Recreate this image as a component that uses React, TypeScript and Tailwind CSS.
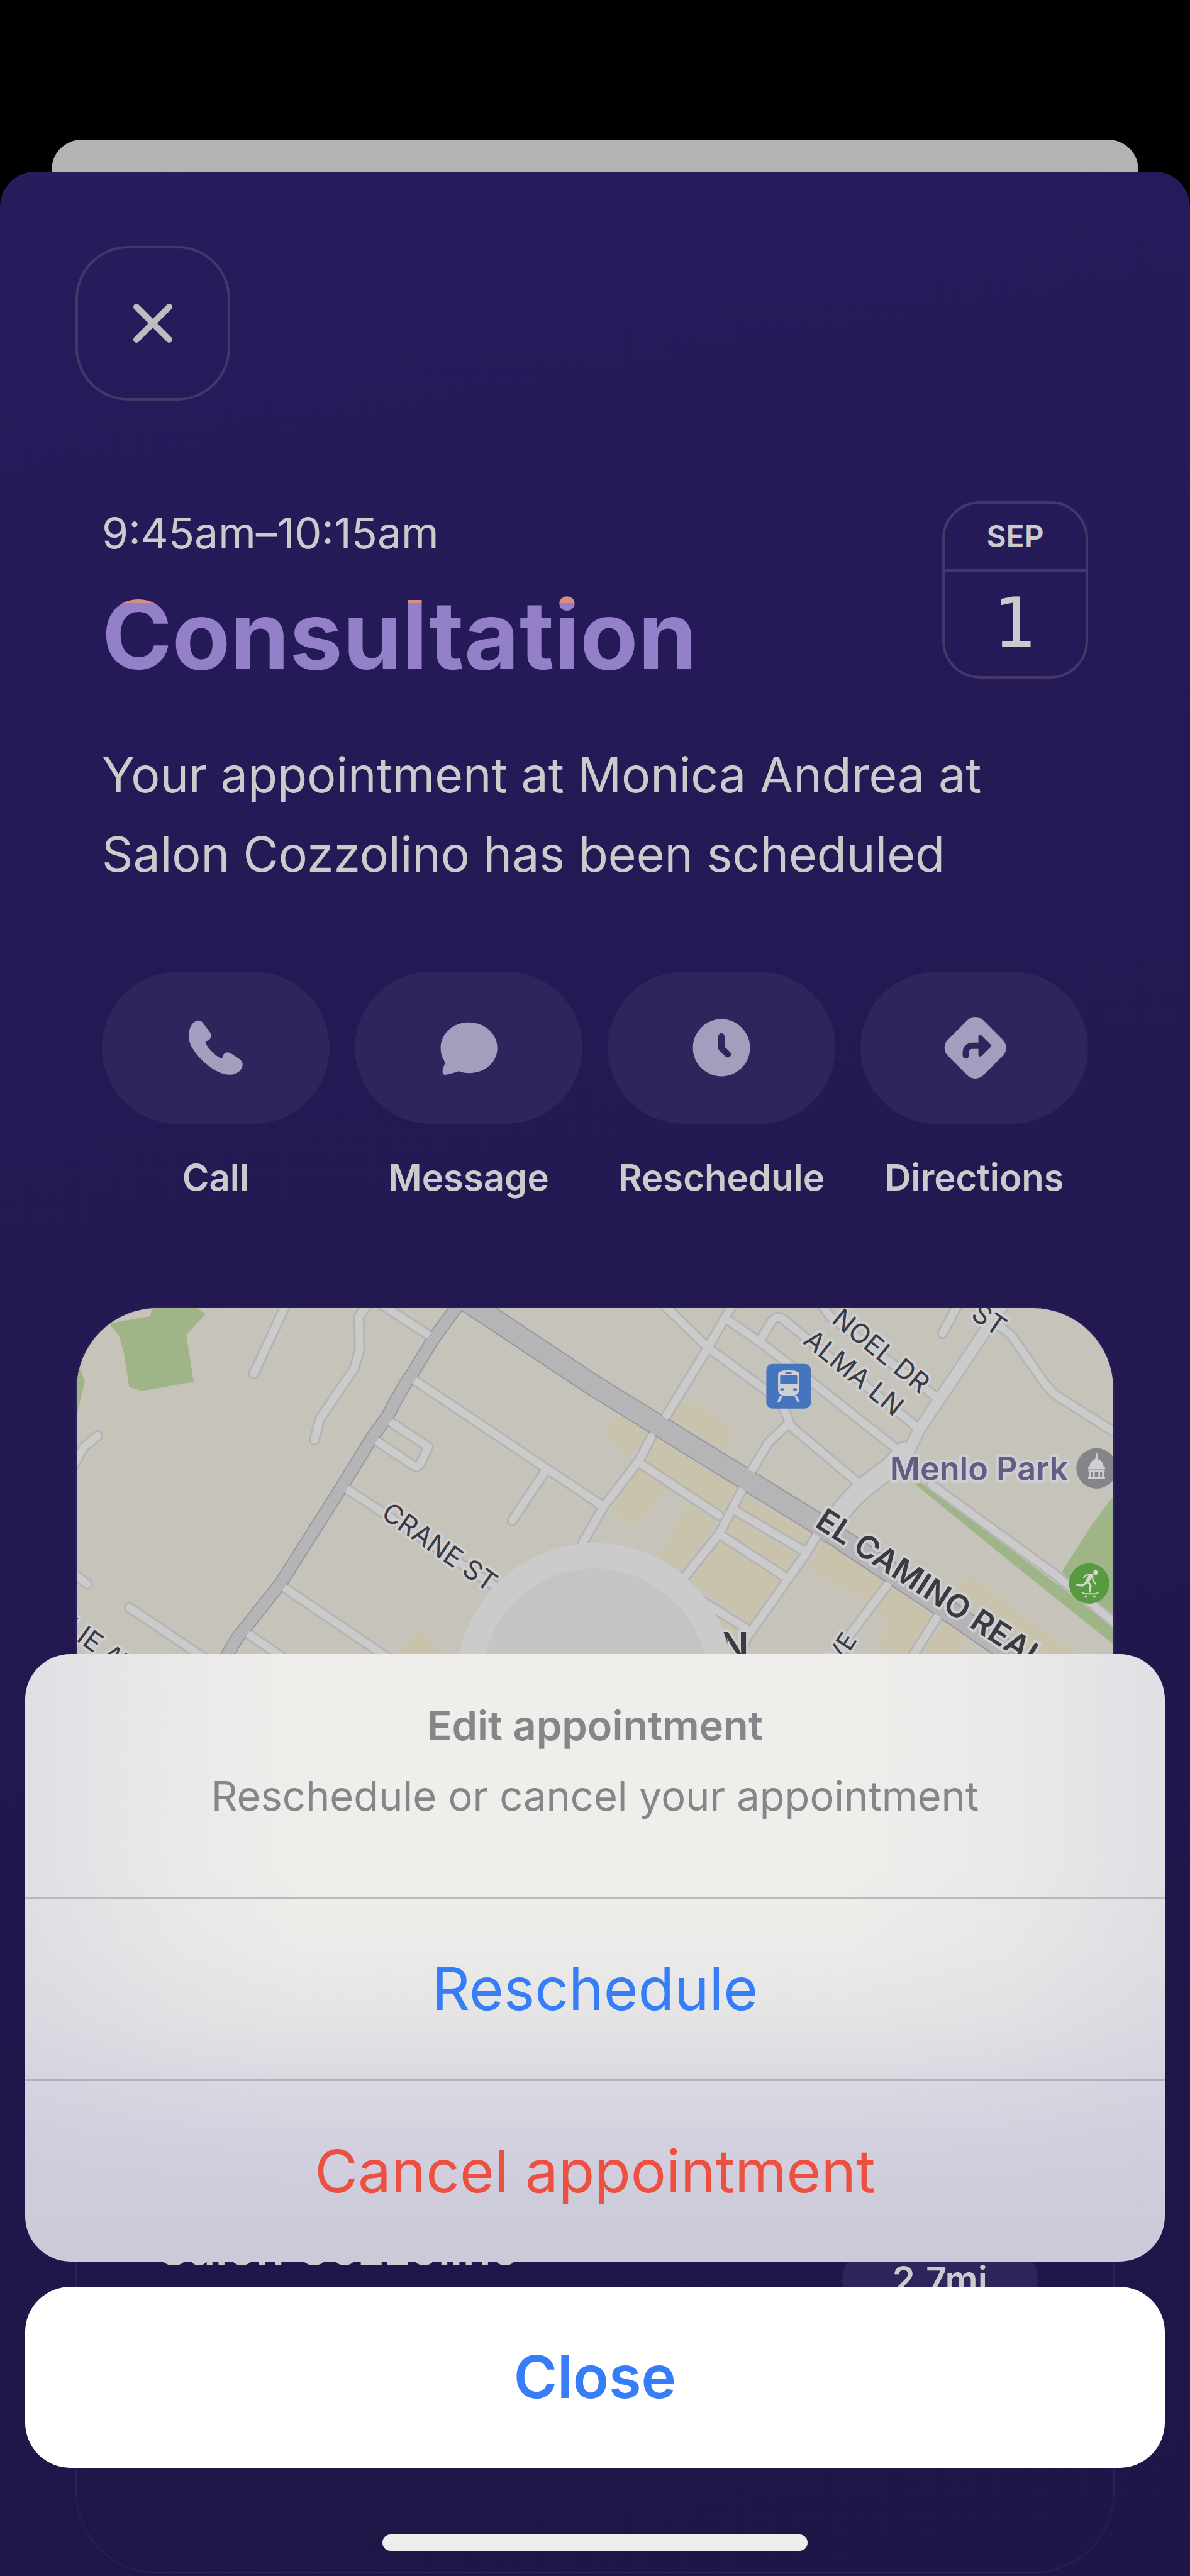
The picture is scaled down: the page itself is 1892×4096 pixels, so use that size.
import type { ReactNode } from 'react'

interface Action {
  label: string
  icon: ReactNode
}

const actions: Action[] = [
  {
    label: 'Call',
    icon: (
      <svg viewBox="24 33 300 300" className="size-[98px]" fill="#a59dbe" aria-hidden="true">
        <path d="M62 64Q78 50 94 51Q106 51 116 68L146 108Q154 118 151 130Q147 143 135 148L124 153Q124 165 134 176Q155 206 185 227Q197 236 205 234L209 222Q215 206 230 205Q240 204 252 213L282 233Q305 247 305 264Q305 280 290 296Q272 313 245 314Q200 317 140 272Q85 230 55 175Q42 150 43 120Q44 84 62 64Z" />
      </svg>
    ),
  },
  {
    label: 'Message',
    icon: (
      <svg viewBox="1246 33 300 300" className="size-[98px]" fill="#a59dbe" aria-hidden="true">
        <path d="M1397 60C1475 60 1536 115 1536 184C1536 255 1475 306 1400 306Q1370 306 1349 297Q1325 305 1288 314Q1268 317 1269 298Q1270 285 1280 262Q1280 252 1277 245Q1260 220 1260 184C1260 115 1320 60 1397 60Z" />
      </svg>
    ),
  },
  {
    label: 'Reschedule',
    icon: (
      <svg viewBox="17 33 300 300" className="size-[98px]" aria-hidden="true">
        <circle cx="167" cy="183" r="139" fill="#a59dbe" />
        <path d="M167 128V184L198 215" fill="none" stroke="#30245c" strokeWidth="31" strokeLinecap="round" strokeLinejoin="round" />
      </svg>
    ),
  },
  {
    label: 'Directions',
    icon: (
      <svg viewBox="1241 33 300 300" className="size-[98px] overflow-visible" aria-hidden="true">
        <rect x="1274" y="61" width="244" height="244" rx="55" fill="#a59dbe" transform="rotate(45 1396 183)" />
        <path d="M1350 220V208Q1350 173 1385 173H1420" fill="none" stroke="#30245c" strokeWidth="31" strokeLinecap="round" />
        <path d="M1420 130L1464 173L1420 216Z" fill="#30245c" stroke="#30245c" strokeWidth="18" strokeLinejoin="round" />
      </svg>
    ),
  },
]

const parks = [
  '52,25 118,13 123,-2 192,-2 208,10 177,43 189,119 106,134 85,128 76,72 68,43',
  '-2,85 6,98 13,118 1,169 -2,169',
  '1354,284 1365,282 1549,420 1676,515 1676,544 1526,424',
  '1676,303 1641,349 1592,426 1612,448 1676,495',
]

const blocks = [
  '978,151 1009,159 1063,199 1049,230 958,179',
  '871,171 850,207 894,242 923,203',
  '937,211 1067,290 1041,327 917,246',
  '906,258 955,292 903,355 863,329',
  '986,317 1035,345 978,426 939,400',
  '1081,306 1187,365 1170,385 1069,323',
  '1061,335 1167,400 1147,428 1047,361',
  '1038,375 1135,440 1090,513 992,440',
  '1207,377 1308,442 1279,476 1181,420',
  '1316,452 1385,497 1345,562 1292,547 1313,511 1285,480',
  '1402,507 1440,535 1422,562 1366,562',
  '1440,428 1618,562 1554,562 1422,456',
  '1042,505 1090,530 1075,562 1050,562',
  '550,515 597,562 517,562',
]

const streets = [
  'M340 -10L286 106',
  'M474 -10L456 13L457 68L448 98L393 179L384 213',
  'M486 -10L574 47',
  'M545 116L760 260L849 319',
  'M758 262L704 343',
  'M508 185L568 224L556 250Q551 260 542 253L485 215',
  'M436 292L677 450',
  'M330 448L504 566',
  'M275 525L338 568',
  'M85 484L207 566',
  'M34 206L11 225L-6 256',
  'M17 446L-6 428',
  'M929 207L909 246L851 321L818 379',
  'M820 300L851 321',
  'M952 175L1020 64L1062 -10',
  'M944 -10L1020 64L1124 140Q1146 160 1152 189L1262 282',
  'M1152 185L1118 217L1091 262',
  'M1049 17L1107 57L1158 96L1328 230',
  'M1104 53L1121 24Q1132 8 1144 20L1170 41L1356 191',
  'M1200 -10L1218 14L1388 143',
  'M1426 -10L1399 41',
  'M1474 14L1511 45L1566 124L1583 141L1684 205',
  'M1382 286L1583 432L1684 514',
  'M909 250L1038 335',
  'M1075 294L1055 333L1038 365L978 440',
  'M1064 327L1176 393',
  'M1038 365L1141 432',
  'M1199 362L1176 400L1084 531L1066 570',
  'M1015 476L1090 523',
  'M1311 446L1250 527L1230 570',
  'M1391 499L1346 570',
]

const wideStreets = ['M1500 -10L1468 37L1362 195L1340 240']

const mapLabels = [
  { text: 'CRANE ST', x: 490, y: 337, angle: 35, size: 43 },
  { text: 'NOEL DR', x: 1218, y: 22, angle: 39, size: 43 },
  { text: 'ALMA LN', x: 1172, y: 56, angle: 39, size: 43 },
  { text: 'ST', x: 1443, y: 15, angle: 35, size: 43 },
  { text: 'LIE AVE', x: -22, y: 522, angle: 36, size: 43 },
]

function MapView() {
  return (
    <svg viewBox="0 0 1675 1320" className="block h-auto w-full" fontFamily="Inter, sans-serif" role="img" aria-label="Map of Menlo Park">
      <rect width="1675" height="1320" fill="#c6c3bb" />
      <g fill="#c9c3ae">
        {blocks.map((points) => (
          <polygon key={points} points={points} />
        ))}
      </g>
      <g fill="#9fb587">
        {parks.map((points) => (
          <polygon key={points} points={points} />
        ))}
      </g>

      {/* casing first, so that junctions stay open */}
      <g fill="none" strokeLinecap="round" strokeLinejoin="round">
        <g stroke="#b4b4b5">
          {streets.map((d) => (
            <path key={d} d={d} strokeWidth="18" />
          ))}
          {wideStreets.map((d) => (
            <path key={d} d={d} strokeWidth="22" />
          ))}
          <path d="M1338 232L1312 260Q1262 294 1238 325L1214 362" strokeWidth="36" />
        </g>
        <path d="M620 -10L577 49L542 106Q524 132 502 175L476 211L430 286L330 444L258 535L240 566" stroke="#98989f" strokeWidth="22" />
        <path d="M614 -22L837 126L1192 345L1305 420L1388 475L1500 552" stroke="#98989f" strokeWidth="36" />
        <g stroke="#cbcbcb">
          {streets.map((d) => (
            <path key={d} d={d} strokeWidth="12" />
          ))}
          {wideStreets.map((d) => (
            <path key={d} d={d} strokeWidth="17" />
          ))}
          <path d="M1338 232L1312 260Q1262 294 1238 325L1214 362" strokeWidth="30" />
        </g>
        <path d="M620 -10L577 49L542 106Q524 132 502 175L476 211L430 286L330 444L258 535L240 566" stroke="#b5b5b7" strokeWidth="18" />
        <path d="M614 -22L837 126L1192 345L1305 420L1388 475L1500 552" stroke="#b5b5b7" strokeWidth="32" />
      </g>

      <g fill="#3b3b3f" stroke="#cfcfd3" strokeWidth="8" strokeLinejoin="round" paintOrder="stroke">
        {mapLabels.map((label) => (
          <text key={label.text} fontSize={label.size} transform={`translate(${label.x} ${label.y}) rotate(${label.angle})`}>
            {label.text}
          </text>
        ))}
        <text fontSize="40" textAnchor="end" transform="translate(1262 536) rotate(-57)">
          AVE
        </text>
        <text fontSize="51" fontWeight="600" transform="translate(1191 352) rotate(33)">
          EL CAMINO REAL
        </text>
        <text x="1086" y="568" fontSize="62" fontWeight="600" textAnchor="end">
          N
        </text>
        <text x="1314" y="278" fontSize="53" fontWeight="600" fill="#635c85">
          Menlo Park
        </text>
      </g>

      <circle cx="837" cy="603" r="223" fill="#cbcbcb" />
      <circle cx="837" cy="603" r="182" fill="#c4c4c4" />

      {/* train station */}
      <g transform="translate(1097 69) scale(0.3333)">
        <rect x="52" y="64" width="216" height="216" rx="28" fill="#4576bd" />
        <path d="M109 112Q109 95 160 95Q211 95 211 112V192Q211 210 186 218H134Q109 210 109 192Z" fill="#cfd0d6" />
        <path d="M126 217L110 248M193 217L209 248" stroke="#cfd0d6" strokeWidth="11" fill="none" />
        <rect x="119" y="119" width="83" height="43" rx="3" fill="#4576bd" />
        <rect x="144" y="103" width="31" height="8" rx="3" fill="#4576bd" />
        <rect x="119" y="182" width="19" height="10" rx="3" fill="#4576bd" />
        <rect x="182" y="182" width="19" height="10" rx="3" fill="#4576bd" />
      </g>

      {/* town hall and skate park */}
      <g transform="translate(1578 219) scale(0.3333)">
        <circle cx="210" cy="120" r="98" fill="#85848b" />
        <path d="M207 46H213L216 74Q242 84 245 114H251V125H169V114H175Q178 84 204 74ZM171 129H249V137H171ZM173 137H183V162H173ZM193 137H201V162H193ZM219 137H227V162H219ZM237 137H247V162H237ZM169 162H251V172H169Z" fill="#d0d0d2" />
        <circle cx="174" cy="678" r="98" fill="#579b41" />
        <g fill="none" stroke="#d2d8ce" strokeLinecap="round" strokeLinejoin="round">
          <path d="M148 649L160 637L190 636L193 665L206 681" strokeWidth="7" />
          <path d="M182 640L166 666" strokeWidth="19" />
          <path d="M163 670L143 688L115 685M170 672L181 688L178 718" strokeWidth="10" />
          <path d="M141 723Q148 728 158 728H200Q210 728 217 723" strokeWidth="6" />
        </g>
        <g fill="#d2d8ce">
          <circle cx="205" cy="625" r="11" />
          <circle cx="158" cy="741" r="6" />
          <circle cx="199" cy="741" r="6" />
        </g>
      </g>
    </svg>
  )
}

function DateBadge() {
  return (
    <div className="h-[282px] w-[232px] shrink-0 overflow-hidden rounded-[60px] border-4 border-[#433868] text-center text-[#cbcbcb]">
      <div className="border-b-4 border-[#433868] text-[48px] leading-[104px] font-semibold">SEP</div>
      <div className="font-['DejaVu_Sans'] text-[108px] leading-[164px]">1</div>
    </div>
  )
}

function ActionSheet() {
  return (
    <div className="absolute inset-x-0 bottom-0 px-10 pb-[42px]">
      <div
        role="dialog"
        aria-labelledby="sheet-title"
        className="overflow-hidden rounded-[72px] bg-[linear-gradient(90deg,rgba(205,202,219,0.42)_0%,rgba(205,202,219,0.3)_6%,rgba(205,202,219,0.12)_14%,rgba(205,202,219,0)_24%,rgba(205,202,219,0)_72%,rgba(205,202,219,0.12)_86%,rgba(205,202,219,0.3)_94%,rgba(205,202,219,0.42)_100%),linear-gradient(180deg,#efeeeb_0%,#efeeeb_35%,#ebebe9_48%,#e4e4e5_60%,#dbdae2_70%,#d3d1df_80%,#cecbdb_90%,#cdc9da_100%)] text-center"
      >
        <div className="h-[389px] border-b-3 border-[#b9b8ba] px-10 pt-[66px] text-[#85858a]">
          <h2 id="sheet-title" className="text-[65px] leading-[96px] font-semibold">
            Edit appointment
          </h2>
          <p className="pt-4 text-[65px] leading-[96px]">Reschedule or cancel your appointment</p>
        </div>
        <button type="button" className="block h-[290px] w-full border-b-3 border-[#b1afc0] text-[94px] text-[#387df8]">
          Reschedule
        </button>
        <button type="button" className="block h-[287px] w-full text-[94px] text-[#ed5041]">
          Cancel appointment
        </button>
      </div>
      <button type="button" className="mt-10 block h-[288px] w-full rounded-[72px] bg-white text-[94px] font-semibold text-[#387df8]">
        Close
      </button>
      <div className="mx-auto mt-[106px] h-[26px] w-[676px] rounded-full bg-[#efedec]" />
    </div>
  )
}

export default function App() {
  return (
    <div className="relative min-h-screen overflow-hidden bg-black pt-[222px] font-[Inter,sans-serif]">
      <div className="mx-[82px] h-[51px] rounded-t-[48px] bg-[#b3b3b3]" />

      <main className="rounded-t-[56px] bg-[linear-gradient(170deg,#271c5c_0%,#251a57_24%,#231850_50%,#1f1546_100%)] px-[120px] pt-[118px] pb-1.5 text-[#cbcbcb]">
        <button type="button" aria-label="Close" className="flex size-[246px] items-center justify-center rounded-[84px] border-4 border-[#433868]">
          <svg viewBox="0 0 62 62" className="size-[62px]" stroke="#bdbdbd" strokeWidth="10" strokeLinecap="round" aria-hidden="true">
            <path d="M5 5L57 57M57 5L5 57" />
          </svg>
        </button>

        <div className="px-[42px] pt-[160px]">
          <div className="flex items-start justify-between">
            <div>
              <p className="text-[68px] leading-[100px]">9:45am–10:15am</p>
              <h1 className="mt-3 bg-[linear-gradient(180deg,#d98b85_50px,#9380c8_50px)] bg-clip-text text-[151px] leading-[200px] font-bold text-transparent">
                Consultation
              </h1>
            </div>
            <DateBadge />
          </div>
          <p className="mt-[60px] text-[77px] leading-[126px]">
            Your appointment at Monica Andrea at Salon Cozzolino has been scheduled
          </p>

          <div className="mt-[124px] grid grid-cols-4 gap-10">
            {actions.map(({ label, icon }) => (
              <button key={label} type="button" className="flex flex-col items-center">
                <span className="flex h-[242px] w-full items-center justify-center rounded-full bg-[#30245c]">{icon}</span>
                <span className="mt-[45px] text-[58px] leading-[80px] font-semibold">{label}</span>
              </button>
            ))}
          </div>
        </div>

        <section className="mt-[166px] overflow-hidden rounded-[130px] border-2 border-[#2a1f60]">
          <MapView />
          <div className="flex h-[711px] items-start justify-between pt-[150px] pr-[120px] pl-[130px]">
            <h2 className="text-[74px] leading-[90px] font-semibold">Salon Cozzolino</h2>
            <span className="mt-[44px] rounded-full bg-[#30245c] px-20 text-[58px] leading-[104px] font-semibold">2.7mi</span>
          </div>
        </section>
      </main>

      <ActionSheet />
    </div>
  )
}
